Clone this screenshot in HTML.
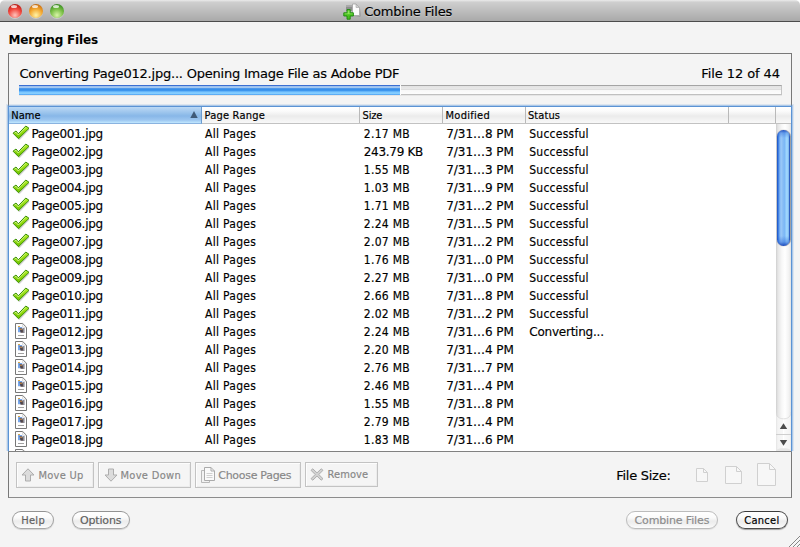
<!DOCTYPE html>
<html><head><meta charset="utf-8"><title>Combine Files</title>
<style>
*{box-sizing:border-box;margin:0;padding:0}
html,body{width:800px;height:547px;overflow:hidden}
body{background:#f4f4f4;font-family:"DejaVu Sans","Liberation Sans",sans-serif;font-size:13px;color:#000;position:relative}
.abs{position:absolute}
.t{position:absolute;white-space:pre;line-height:normal;-webkit-text-stroke:.16px currentColor}
.t11{font-size:11px}.t12{font-size:12px}.t13{font-size:13px}
.t11c{font-size:11px;font-family:"DejaVu Sans Condensed","DejaVu Sans","Liberation Sans",sans-serif}
.t12c{font-size:12px;font-family:"DejaVu Sans Condensed","DejaVu Sans","Liberation Sans",sans-serif}
.t13c{font-size:13px;font-family:"DejaVu Sans Condensed","DejaVu Sans","Liberation Sans",sans-serif}
#tbback{left:0;top:0;width:800px;height:22px;background:#fff}
#titlebar{left:0;top:0;width:800px;height:22px;border-radius:5px 5px 0 0;background:linear-gradient(#e9e9e9 0,#e0e0e0 1px,#cfcfcf 2px,#bdbdbd 11px,#a9a9a9 21px);border-bottom:1px solid #4c4c4c}
.tl{width:14px;height:14px;border-radius:50%;top:4px}
.tl:after{content:"";position:absolute;left:3px;top:1px;width:6px;height:3px;border-radius:50%;background:rgba(255,255,255,.75)}
#group{left:8px;top:53px;width:784px;height:445px;border:1px solid #787878;border-bottom-color:#8c8c8c}
#pbar{left:19px;top:85px;width:763px;height:10px;border-top:1px solid #a4a4a4;border-bottom:1px solid #c0c0c0;border-left:1px solid #c4c4c4;border-right:1px solid #c4c4c4;background:linear-gradient(#e3e3e3 0,#e7e7e7 2.5px,#dedede 3.5px,#f8f8f8 4.5px,#fdfdfd 8px);box-shadow:0 1px 0 #e6e6e6}
#pfill{left:-1px;top:-1px;width:382px;height:10px;border-right:1px solid #fdfdfd;background:linear-gradient(#3b6fd2 0,#3b6fd2 1px,#9abfee 1.2px,#a4c8f0 2.6px,#4f9aec 3.4px,#2f8ae8 5px,#4da2f2 6px,#7ac6ff 7px,#86ceff 8.6px,#5eaef6 9.4px,#5aaaf5 10px)}
#table{left:8px;top:106px;width:784px;height:346px;border:1px solid #5b93d4;border-bottom-color:#818181;background:#fff}
#thead{left:0;top:0;width:782px;height:17px;background:linear-gradient(#ffffff 0,#fbfbfb 4px,#efefef 8px,#ebebeb 9px,#f3f3f3 13px,#f8f8f8 16px);border-bottom:1px solid #c2c2c2}
.th{top:0;height:16px;border-right:1px solid #b9b9b9}
.th.sel{height:17px;background:linear-gradient(#bcd9f5 0,#a5caef 4px,#8dbbe9 8px,#88b7e8 9px,#9cc6f0 13px,#b4dcfa 15px,#c2e8ff 16px);border-right:1px solid #6d9ccf;border-bottom:1px solid #8ab3e0}
#sbar{left:767px;top:17px;width:15px;height:327px;background:linear-gradient(90deg,#cfcfcf 0,#e6e6e6 2px,#f8f8f8 6px,#ffffff 9px,#f2f2f2 13px,#e2e2e2 15px)}
#thumb{left:1px;top:6px;width:13px;height:116px;border-radius:6.5px;background:linear-gradient(180deg,rgba(16,60,180,.85) 0,rgba(30,90,210,.35) 3px,rgba(255,255,255,0) 8px,rgba(255,255,255,0) 106px,rgba(30,90,210,.4) 112px,rgba(16,60,180,.9) 116px),linear-gradient(90deg,#1a4fbe 0,#2e6fdc 1px,#6ea8f0 2.5px,#9ccaf8 4px,#86bcf5 6px,#7cb8f6 7.5px,#a6dcff 10px,#84bcf0 11.5px,#2f5fc0 12.5px,#3a4f80 13px);box-shadow:0 0 1px rgba(0,0,40,.65),1px 0 0 rgba(60,60,60,.35)}
.btn{top:462px;height:26px;border:1px solid #c3c3c3;background:#f5f5f5;box-shadow:inset 1px 1px 0 #fdfdfd,inset -1px -1px 0 #ececec}
.pill{top:511px;height:18px;border-radius:9px;border:1px solid #a2a2a2;border-top-color:#939393;border-bottom-color:#a8a8a8;background:linear-gradient(#ffffff 0,#fafafa 6px,#ececec 9px,#f3f3f3 13px,#fdfdfd 16px);box-shadow:0 1px 1px rgba(0,0,0,.14)}
</style></head><body>
<svg width="0" height="0" style="position:absolute"><defs>
<linearGradient id="cg" x1="0" y1="0" x2="0" y2="1"><stop offset="0" stop-color="#b5ee2c"/><stop offset=".5" stop-color="#8fd80c"/><stop offset="1" stop-color="#6cc000"/></linearGradient>
<g id="chk"><path d="M2.2 9.6 L5.2 7.4 L7.6 10.2 L14.8 2.6 L17.6 4.8 L7.6 15.2 Z" fill="rgba(0,0,0,.16)"/><path d="M1 8.2 L4 6 L6.3 8.8 L13.8 1 L17 3.3 L6.5 13.7 Z" fill="url(#cg)" stroke="#3c8f07" stroke-width="1" stroke-linejoin="round"/><path d="M2.6 8.2 L4 7.2 L6.3 10 L13.9 2.3" fill="none" stroke="#d4f98a" stroke-width="1" opacity=".9"/></g>
<g id="doc"><path d="M1.5 1.5 H8.7 L12.5 5.3 V16.5 H1.5 Z" fill="#fefefe" stroke="#777777"/><path d="M8.7 2 V5.3 H12" fill="none" stroke="#c9c9c9" stroke-width=".8"/><rect x="4" y="5" width="6" height="6" fill="#dfe6f2"/><rect x="4" y="5" width="4" height="5" fill="#76a6ea"/><rect x="4" y="4" width="2" height="1" fill="#d9a84a"/><path d="M5.5 6 L8.6 6.6 L9.4 10.8 L6.6 10.8 Z" fill="#4a3b3a" opacity=".9"/><rect x="9" y="6" width="1.6" height="5" fill="#8d8d97"/><rect x="6.2" y="6.6" width="1.6" height="1.4" fill="#c88a4a"/><rect x="4" y="13" width="6" height="1" fill="#a2a2a2"/></g>
<g id="pg"><path d="M0.5 0.5 H7.5 L11.5 4.5 V14.5 H0.5 Z"/><path d="M7.5 0.5 V4.5 H11.5" fill="none"/></g>
</defs></svg>
<div id="tbback" class="abs"></div>
<div id="titlebar" class="abs">
 <div class="abs tl" style="left:8px;background:radial-gradient(circle at 50% 80%,#ffc4bc 0,#f2483e 48%,#c4221a 78%,#7a1610 100%);box-shadow:0 1px 0 rgba(255,255,255,.35)"></div>
 <div class="abs tl" style="left:29px;background:radial-gradient(circle at 50% 80%,#fff3a6 0,#f3a830 48%,#cf7616 78%,#84480c 100%);box-shadow:0 1px 0 rgba(255,255,255,.35)"></div>
 <div class="abs tl" style="left:50px;background:radial-gradient(circle at 50% 80%,#d9f5a8 0,#78be44 48%,#44952a 78%,#265c12 100%);box-shadow:0 1px 0 rgba(255,255,255,.35)"></div>
 <svg class="abs" style="left:343px;top:2px" width="18" height="18" viewBox="0 0 18 18"><path d="M3 3.5 H9.5 V9 H3 Z" fill="#8e8e8e"/><path d="M3 3.5 H9.5 V5 H3 Z" fill="#a8a8a8"/><path d="M10.8 14.6 H17.4 V6 L16.8 14 Z" fill="rgba(0,0,0,.25)"/><path d="M9.5 2 H13 L16.5 5.5 V13.5 H9.5 Z" fill="#fcfcfc" stroke="#a2a2a2" stroke-width=".8"/><path d="M13 2 V5.5 H16.5 Z" fill="#d2d2d2" stroke="#a2a2a2" stroke-width=".6"/><path d="M4 7.6 H7.2 V10.8 H10.4 V14 H7.2 V17.2 H4 V14 H0.8 V10.8 H4 Z" fill="#48c01e" stroke="#1c8a0c" stroke-width=".9" stroke-linejoin="round"/><path d="M4.7 8.4 H6.5 V11.5 H9.6 V12.3 H1.6 V11.5 H4.7 Z" fill="#a4f070" opacity=".75"/></svg>
 <div class="t t13" style="left:364.25px;top:4px;letter-spacing:-0.209px;text-shadow:0 1px 0 rgba(255,255,255,.35)">Combine Files</div>
</div>
<div class="t t12" style="left:8.45px;top:33px;letter-spacing:-0.171px;font-weight:bold;-webkit-text-stroke:0">Merging Files</div>
<div id="group" class="abs"></div>
<div class="t t13" style="left:19.40px;top:66px;letter-spacing:-0.208px">Converting Page012.jpg... Opening Image File as Adobe PDF</div>
<div class="t t13" style="left:701.30px;top:66px;letter-spacing:-0.082px">File 12 of 44</div>
<div id="pbar" class="abs"><div id="pfill" class="abs"></div></div>
<div class="abs" style="left:6px;top:104px;width:788px;height:347px;border:1px solid rgba(100,155,220,.16);border-bottom:0"></div><div class="abs" style="left:7px;top:105px;width:786px;height:346px;border:1px solid rgba(100,155,220,.5);border-bottom:0"></div>
<div id="table" class="abs">
 <div id="thead" class="abs">
  <div class="abs th sel" style="left:0;width:193px"><svg class="abs" style="left:181px;top:4px" width="8" height="7" viewBox="0 0 8 7"><path d="M4 0 L7.7 7 H0.3 Z" fill="#3f5a78"/></svg></div>
  <div class="abs th" style="left:193px;width:158px"></div>
  <div class="abs th" style="left:351px;width:83px"></div>
  <div class="abs th" style="left:434px;width:83px"></div>
  <div class="abs th" style="left:517px;width:203px"></div>
  <div class="abs th" style="left:720px;width:47px"></div>
 </div>
 <div id="sbar" class="abs"><div id="thumb" class="abs"></div>
  <svg class="abs" style="left:0;top:285px" width="15" height="42" viewBox="0 0 15 42"><defs><linearGradient id="tg" x1="0" y1="0" x2="1" y2="0"><stop offset="0" stop-color="#cfcfcf"/><stop offset=".13" stop-color="#e6e6e6"/><stop offset=".4" stop-color="#f8f8f8"/><stop offset=".6" stop-color="#ffffff"/><stop offset=".87" stop-color="#f2f2f2"/><stop offset="1" stop-color="#e2e2e2"/></linearGradient><linearGradient id="ag" x1="0" y1="0" x2="1" y2="0"><stop offset="0" stop-color="#e4e4e4"/><stop offset=".12" stop-color="#f3f3f3"/><stop offset=".45" stop-color="#f7f7f7"/><stop offset=".5" stop-color="#ffffff"/><stop offset=".58" stop-color="#f9f9f9"/><stop offset=".9" stop-color="#f4f4f4"/><stop offset="1" stop-color="#e9e9e9"/></linearGradient></defs><path d="M0 0 H15 V42 H0 Z" fill="url(#ag)"/><path d="M0 0 V3 C0 7.5 3 9.8 7.5 9.8 C12 9.8 15 7.5 15 3 V0 Z" fill="url(#tg)"/><path d="M0 3 C0 7.5 3 9.8 7.5 9.8 C12 9.8 15 7.5 15 3" fill="none" stroke="#d9d9d9" stroke-width=".8"/><path d="M0 25.5 H15" stroke="#cfcfcf"/><path d="M7.5 14.2 L11.2 20 H3.8 Z" fill="#4c4c4c"/><path d="M7.5 36.8 L11.2 31 H3.8 Z" fill="#4c4c4c"/><path d="M0 42 V41 C2 39.6 5 39.2 7.5 39.2 C10 39.2 13 39.6 15 41 V42 Z" fill="#e6e6e6"/></svg>
 </div>
</div>
<div class="t t11c" style="left:11.25px;top:109px;letter-spacing:0.012px">Name</div>
<div class="t t11c" style="left:204.50px;top:109px;letter-spacing:0.209px">Page Range</div>
<div class="t t11c" style="left:362.50px;top:109px;letter-spacing:-0.157px">Size</div>
<div class="t t11c" style="left:445.50px;top:109px;letter-spacing:0.281px">Modified</div>
<div class="t t11c" style="left:528.00px;top:109px;letter-spacing:0.076px">Status</div>
<div id="rows" class="abs" style="left:0;top:0;width:776px;height:451px;overflow:hidden">
<svg class="abs" style="left:12px;top:125px" width="18" height="15"><use href="#chk"/></svg>
<div class="t t12" style="left:31.40px;top:127px;letter-spacing:-0.249px">Page001.jpg</div>
<div class="t t12c" style="left:205.00px;top:127px;letter-spacing:0.302px">All Pages</div>
<div class="t t12c" style="left:363.75px;top:127px;letter-spacing:0.295px">2.17 MB</div>
<div class="t t12" style="left:446.25px;top:127px;letter-spacing:-0.056px">7/31…8 PM</div>
<div class="t t12c" style="left:529.25px;top:127px;letter-spacing:0.239px">Successful</div>
<svg class="abs" style="left:12px;top:143px" width="18" height="15"><use href="#chk"/></svg>
<div class="t t12" style="left:31.40px;top:145px;letter-spacing:-0.249px">Page002.jpg</div>
<div class="t t12c" style="left:205.00px;top:145px;letter-spacing:0.302px">All Pages</div>
<div class="t t12" style="left:363.75px;top:145px;letter-spacing:-0.295px">243.79 KB</div>
<div class="t t12" style="left:446.25px;top:145px;letter-spacing:-0.056px">7/31…3 PM</div>
<div class="t t12c" style="left:529.25px;top:145px;letter-spacing:0.239px">Successful</div>
<svg class="abs" style="left:12px;top:161px" width="18" height="15"><use href="#chk"/></svg>
<div class="t t12" style="left:31.40px;top:163px;letter-spacing:-0.249px">Page003.jpg</div>
<div class="t t12c" style="left:205.00px;top:163px;letter-spacing:0.302px">All Pages</div>
<div class="t t12c" style="left:363.75px;top:163px;letter-spacing:0.295px">1.55 MB</div>
<div class="t t12" style="left:446.25px;top:163px;letter-spacing:-0.056px">7/31…3 PM</div>
<div class="t t12c" style="left:529.25px;top:163px;letter-spacing:0.239px">Successful</div>
<svg class="abs" style="left:12px;top:179px" width="18" height="15"><use href="#chk"/></svg>
<div class="t t12" style="left:31.40px;top:181px;letter-spacing:-0.249px">Page004.jpg</div>
<div class="t t12c" style="left:205.00px;top:181px;letter-spacing:0.302px">All Pages</div>
<div class="t t12c" style="left:363.75px;top:181px;letter-spacing:0.295px">1.03 MB</div>
<div class="t t12" style="left:446.25px;top:181px;letter-spacing:-0.056px">7/31…9 PM</div>
<div class="t t12c" style="left:529.25px;top:181px;letter-spacing:0.239px">Successful</div>
<svg class="abs" style="left:12px;top:197px" width="18" height="15"><use href="#chk"/></svg>
<div class="t t12" style="left:31.40px;top:199px;letter-spacing:-0.249px">Page005.jpg</div>
<div class="t t12c" style="left:205.00px;top:199px;letter-spacing:0.302px">All Pages</div>
<div class="t t12c" style="left:363.75px;top:199px;letter-spacing:0.295px">1.71 MB</div>
<div class="t t12" style="left:446.25px;top:199px;letter-spacing:-0.056px">7/31…2 PM</div>
<div class="t t12c" style="left:529.25px;top:199px;letter-spacing:0.239px">Successful</div>
<svg class="abs" style="left:12px;top:215px" width="18" height="15"><use href="#chk"/></svg>
<div class="t t12" style="left:31.40px;top:217px;letter-spacing:-0.249px">Page006.jpg</div>
<div class="t t12c" style="left:205.00px;top:217px;letter-spacing:0.302px">All Pages</div>
<div class="t t12c" style="left:363.75px;top:217px;letter-spacing:0.295px">2.24 MB</div>
<div class="t t12" style="left:446.25px;top:217px;letter-spacing:-0.056px">7/31…5 PM</div>
<div class="t t12c" style="left:529.25px;top:217px;letter-spacing:0.239px">Successful</div>
<svg class="abs" style="left:12px;top:233px" width="18" height="15"><use href="#chk"/></svg>
<div class="t t12" style="left:31.40px;top:235px;letter-spacing:-0.249px">Page007.jpg</div>
<div class="t t12c" style="left:205.00px;top:235px;letter-spacing:0.302px">All Pages</div>
<div class="t t12c" style="left:363.75px;top:235px;letter-spacing:0.295px">2.07 MB</div>
<div class="t t12" style="left:446.25px;top:235px;letter-spacing:-0.056px">7/31…2 PM</div>
<div class="t t12c" style="left:529.25px;top:235px;letter-spacing:0.239px">Successful</div>
<svg class="abs" style="left:12px;top:251px" width="18" height="15"><use href="#chk"/></svg>
<div class="t t12" style="left:31.40px;top:253px;letter-spacing:-0.249px">Page008.jpg</div>
<div class="t t12c" style="left:205.00px;top:253px;letter-spacing:0.302px">All Pages</div>
<div class="t t12c" style="left:363.75px;top:253px;letter-spacing:0.295px">1.76 MB</div>
<div class="t t12" style="left:446.25px;top:253px;letter-spacing:-0.056px">7/31…0 PM</div>
<div class="t t12c" style="left:529.25px;top:253px;letter-spacing:0.239px">Successful</div>
<svg class="abs" style="left:12px;top:269px" width="18" height="15"><use href="#chk"/></svg>
<div class="t t12" style="left:31.40px;top:271px;letter-spacing:-0.249px">Page009.jpg</div>
<div class="t t12c" style="left:205.00px;top:271px;letter-spacing:0.302px">All Pages</div>
<div class="t t12c" style="left:363.75px;top:271px;letter-spacing:0.295px">2.27 MB</div>
<div class="t t12" style="left:446.25px;top:271px;letter-spacing:-0.056px">7/31…0 PM</div>
<div class="t t12c" style="left:529.25px;top:271px;letter-spacing:0.239px">Successful</div>
<svg class="abs" style="left:12px;top:287px" width="18" height="15"><use href="#chk"/></svg>
<div class="t t12" style="left:31.40px;top:289px;letter-spacing:-0.249px">Page010.jpg</div>
<div class="t t12c" style="left:205.00px;top:289px;letter-spacing:0.302px">All Pages</div>
<div class="t t12c" style="left:363.75px;top:289px;letter-spacing:0.295px">2.66 MB</div>
<div class="t t12" style="left:446.25px;top:289px;letter-spacing:-0.056px">7/31…8 PM</div>
<div class="t t12c" style="left:529.25px;top:289px;letter-spacing:0.239px">Successful</div>
<svg class="abs" style="left:12px;top:305px" width="18" height="15"><use href="#chk"/></svg>
<div class="t t12" style="left:31.40px;top:307px;letter-spacing:-0.249px">Page011.jpg</div>
<div class="t t12c" style="left:205.00px;top:307px;letter-spacing:0.302px">All Pages</div>
<div class="t t12c" style="left:363.75px;top:307px;letter-spacing:0.295px">2.02 MB</div>
<div class="t t12" style="left:446.25px;top:307px;letter-spacing:-0.056px">7/31…2 PM</div>
<div class="t t12c" style="left:529.25px;top:307px;letter-spacing:0.239px">Successful</div>
<svg class="abs" style="left:14px;top:322px" width="14" height="18"><use href="#doc"/></svg>
<div class="t t12" style="left:31.40px;top:325px;letter-spacing:-0.249px">Page012.jpg</div>
<div class="t t12c" style="left:205.00px;top:325px;letter-spacing:0.302px">All Pages</div>
<div class="t t12c" style="left:363.75px;top:325px;letter-spacing:0.295px">2.24 MB</div>
<div class="t t12" style="left:446.25px;top:325px;letter-spacing:-0.056px">7/31…6 PM</div>
<div class="t t12" style="left:529.25px;top:325px;letter-spacing:-0.227px">Converting...</div>
<svg class="abs" style="left:14px;top:340px" width="14" height="18"><use href="#doc"/></svg>
<div class="t t12" style="left:31.40px;top:343px;letter-spacing:-0.249px">Page013.jpg</div>
<div class="t t12c" style="left:205.00px;top:343px;letter-spacing:0.302px">All Pages</div>
<div class="t t12c" style="left:363.75px;top:343px;letter-spacing:0.295px">2.20 MB</div>
<div class="t t12" style="left:446.25px;top:343px;letter-spacing:-0.056px">7/31…4 PM</div>
<svg class="abs" style="left:14px;top:358px" width="14" height="18"><use href="#doc"/></svg>
<div class="t t12" style="left:31.40px;top:361px;letter-spacing:-0.249px">Page014.jpg</div>
<div class="t t12c" style="left:205.00px;top:361px;letter-spacing:0.302px">All Pages</div>
<div class="t t12c" style="left:363.75px;top:361px;letter-spacing:0.295px">2.76 MB</div>
<div class="t t12" style="left:446.25px;top:361px;letter-spacing:-0.056px">7/31…7 PM</div>
<svg class="abs" style="left:14px;top:376px" width="14" height="18"><use href="#doc"/></svg>
<div class="t t12" style="left:31.40px;top:379px;letter-spacing:-0.249px">Page015.jpg</div>
<div class="t t12c" style="left:205.00px;top:379px;letter-spacing:0.302px">All Pages</div>
<div class="t t12c" style="left:363.75px;top:379px;letter-spacing:0.295px">2.46 MB</div>
<div class="t t12" style="left:446.25px;top:379px;letter-spacing:-0.056px">7/31…4 PM</div>
<svg class="abs" style="left:14px;top:394px" width="14" height="18"><use href="#doc"/></svg>
<div class="t t12" style="left:31.40px;top:397px;letter-spacing:-0.249px">Page016.jpg</div>
<div class="t t12c" style="left:205.00px;top:397px;letter-spacing:0.302px">All Pages</div>
<div class="t t12c" style="left:363.75px;top:397px;letter-spacing:0.295px">1.55 MB</div>
<div class="t t12" style="left:446.25px;top:397px;letter-spacing:-0.056px">7/31…8 PM</div>
<svg class="abs" style="left:14px;top:412px" width="14" height="18"><use href="#doc"/></svg>
<div class="t t12" style="left:31.40px;top:415px;letter-spacing:-0.249px">Page017.jpg</div>
<div class="t t12c" style="left:205.00px;top:415px;letter-spacing:0.302px">All Pages</div>
<div class="t t12c" style="left:363.75px;top:415px;letter-spacing:0.295px">2.79 MB</div>
<div class="t t12" style="left:446.25px;top:415px;letter-spacing:-0.056px">7/31…4 PM</div>
<svg class="abs" style="left:14px;top:430px" width="14" height="18"><use href="#doc"/></svg>
<div class="t t12" style="left:31.40px;top:433px;letter-spacing:-0.249px">Page018.jpg</div>
<div class="t t12c" style="left:205.00px;top:433px;letter-spacing:0.302px">All Pages</div>
<div class="t t12c" style="left:363.75px;top:433px;letter-spacing:0.295px">1.83 MB</div>
<div class="t t12" style="left:446.25px;top:433px;letter-spacing:-0.056px">7/31…6 PM</div>
<svg class="abs" style="left:14px;top:448px" width="14" height="18"><use href="#doc"/></svg>
<div class="t t12" style="left:31.40px;top:451px;letter-spacing:-0.249px">Page019.jpg</div>
<div class="t t12c" style="left:205.00px;top:451px;letter-spacing:0.302px">All Pages</div>
<div class="t t12c" style="left:363.75px;top:451px;letter-spacing:0.295px">2.10 MB</div>
<div class="t t12" style="left:446.25px;top:451px;letter-spacing:-0.056px">7/31…6 PM</div>
</div>
<div class="abs btn" style="left:16px;width:78px"><svg class="abs" style="left:4px;top:4.5px" width="14" height="14" viewBox="0 0 14 14"><path d="M7 0.8 L13 7 H9.5 V13 H4.5 V7 H1 Z" fill="#dcdcdc" stroke="#adadad"/></svg></div>
<div class="abs btn" style="left:98px;width:93px"><svg class="abs" style="left:5px;top:5px" width="14" height="14" viewBox="0 0 14 14"><path d="M7 13.2 L13 7 H9.5 V1 H4.5 V7 H1 Z" fill="#dcdcdc" stroke="#adadad"/></svg></div>
<div class="abs btn" style="left:195px;width:106px"><svg class="abs" style="left:5px;top:4px" width="15" height="17" viewBox="0 0 15 17"><path d="M0.5 3.5 H8.5 V15.5 H0.5 Z" fill="#f2f2f2" stroke="#b9b9b9"/><path d="M3.5 0.5 H10 L13.5 4 V13.5 H3.5 Z" fill="#fafafa" stroke="#ababab"/><path d="M10 0.5 V4 H13.5" fill="none" stroke="#ababab"/><path d="M5.5 6.5 H11.5 M5.5 8.5 H11.5 M5.5 10.5 H11.5" stroke="#d0d0d0"/></svg></div>
<div class="abs btn" style="left:305px;width:73px;height:25px"><svg class="abs" style="left:4px;top:5px" width="14" height="13" viewBox="0 0 14 13"><path d="M1 2.3 L2.8 0.8 L7 4.9 L11.2 0.8 L13 2.3 L8.8 6.5 L13 10.7 L11.2 12.2 L7 8.1 L2.8 12.2 L1 10.7 L5.2 6.5 Z" fill="#d2d2d2" stroke="#a9a9a9" stroke-width="0.9"/></svg></div>
<div class="t t11c" style="left:38.50px;top:469px;letter-spacing:0.254px;color:#878787">Move Up</div>
<div class="t t11c" style="left:120.50px;top:469px;letter-spacing:0.307px;color:#878787">Move Down</div>
<div class="t t11" style="left:218.25px;top:469px;letter-spacing:-0.289px;color:#878787">Choose Pages</div>
<div class="t t11c" style="left:327.50px;top:468px;letter-spacing:0.104px;color:#878787">Remove</div>
<div class="t t13" style="left:616.25px;top:468px;letter-spacing:-0.270px">File Size:</div>
<svg class="abs" style="left:696px;top:468px" width="12" height="14" viewBox="0 0 12 14"><path d="M0.5 0.5 H7.5 L11.5 4.5 V13.5 H0.5 Z" fill="#f7f7f7" stroke="#d0d0d0"/><path d="M7.5 0.5 V4.5 H11.5" fill="none" stroke="#d0d0d0"/></svg>
<svg class="abs" style="left:725px;top:466px" width="17" height="18" viewBox="0 0 17 18"><path d="M0.5 0.5 H11.5 L16.5 5.5 V17.5 H0.5 Z" fill="#f7f7f7" stroke="#d0d0d0"/><path d="M11.5 0.5 V5.5 H16.5" fill="none" stroke="#d0d0d0"/></svg>
<svg class="abs" style="left:757px;top:463px" width="19" height="23" viewBox="0 0 19 23"><path d="M0.5 0.5 H12.5 L18.5 6.5 V22.5 H0.5 Z" fill="#f7f7f7" stroke="#d0d0d0"/><path d="M12.5 0.5 V6.5 H18.5" fill="none" stroke="#d0d0d0"/></svg>
<div class="abs pill" style="left:12px;width:42px"></div>
<div class="abs pill" style="left:72px;width:58px"></div>
<div class="abs pill" style="left:626px;width:92px;border-color:#bcbcbc;box-shadow:0 1px 1px rgba(0,0,0,.08)"></div>
<div class="abs pill" style="left:736px;width:52px;border-color:#4c4c4c;border-top-color:#3c3c3c;box-shadow:0 1px 1px rgba(0,0,0,.35)"></div>
<div class="t t11c" style="left:21.25px;top:514px;letter-spacing:0.293px;color:#606060">Help</div>
<div class="t t11" style="left:80.00px;top:514px;letter-spacing:-0.172px;color:#606060">Options</div>
<div class="t t11" style="left:634.50px;top:514px;letter-spacing:-0.138px;color:#8c8c8c">Combine Files</div>
<div class="t t11c" style="left:744.25px;top:514px;letter-spacing:0.284px">Cancel</div>
<svg class="abs" style="left:786px;top:533px" width="14" height="14" viewBox="0 0 14 14"><path d="M14.5 2.5 L2.5 14.5 M14.5 6.5 L6.5 14.5 M14.5 10.5 L10.5 14.5" stroke="#858585" stroke-width="1"/><path d="M14.5 3.7 L3.7 14.5 M14.5 7.7 L7.7 14.5 M14.5 11.7 L11.7 14.5" stroke="#ffffff" stroke-width=".8" opacity=".6"/></svg>
</body></html>
